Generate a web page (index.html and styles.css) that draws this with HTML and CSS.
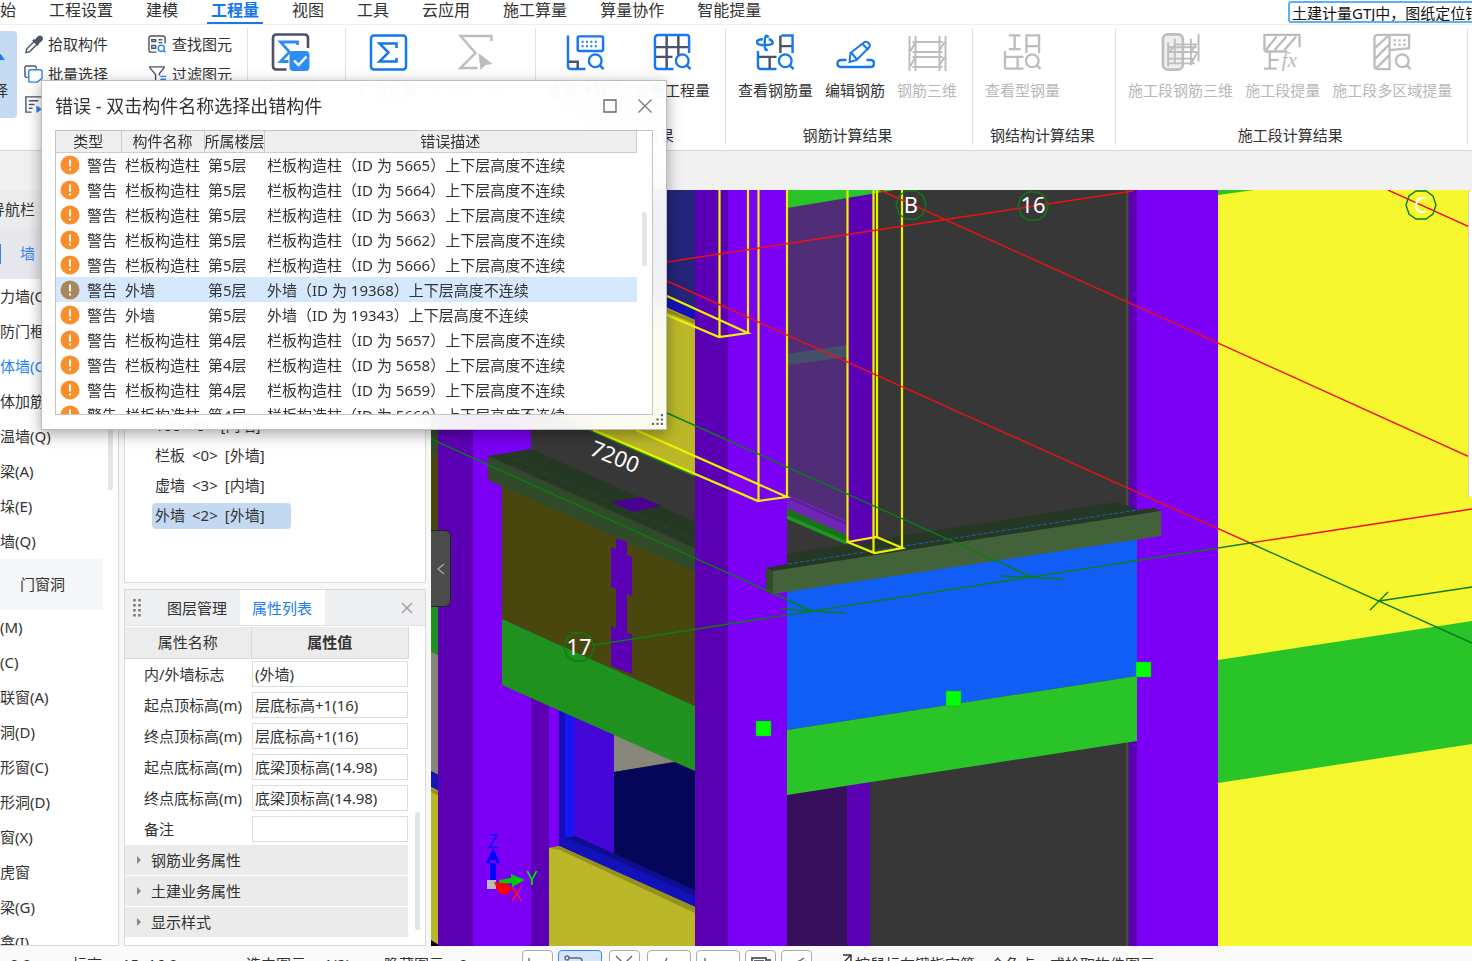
FILE: index.html
```html
<!DOCTYPE html>
<html lang="zh-CN">
<head>
<meta charset="utf-8">
<title>土建计量 GTJ</title>
<link rel="stylesheet" href="styles.css">
</head>
<body>
<svg class="defs" aria-hidden="true">
  <symbol id="warn" viewBox="0 0 20 20"><circle cx="10" cy="10" r="9.5"/><path d="M10 4.5v7M10 13.6v2" stroke="#fff" stroke-width="2"/></symbol>
  <symbol id="mag" viewBox="0 0 18 18"><circle cx="8" cy="8" r="6.5" fill="none" stroke-width="2.4"/><path d="M12.5 12.5l4 4" stroke-width="2.6"/></symbol>
</svg>

<header class="menubar">
  <nav class="menu">
    <a href="#">开始</a><a href="#">工程设置</a><a href="#">建模</a><a href="#" class="active">工程量</a><a href="#">视图</a><a href="#">工具</a><a href="#">云应用</a><a href="#">施工算量</a><a href="#">算量协作</a><a href="#">智能提量</a>
  </nav>
  <input class="search" aria-label="搜索" value="土建计量GTJ中，图纸定位错误">
</header>

<div class="ribbon">
  <div class="group tools">
    <button class="select"><svg viewBox="0 0 38 38"><path d="M24 13l6 8H18z" fill="#1f78ec"/></svg><span>选择</span></button>
    <div class="tool-col">
      <button class="tool"><svg viewBox="0 0 20 20" fill="none" stroke="#4d5468" stroke-width="1.5"><path d="M2 18.500l1-4 8-8 3 3-8 8z"/><path d="M9.500 5l5.500 5.500" stroke-width="2.600"/><path d="M11 6.500l4-4.500q2-1.500 3.500 0t0 3.500L14 9.500z" fill="#4d5468"/></svg>拾取构件</button>
      <button class="tool"><svg viewBox="0 0 20 20" fill="none" stroke="#4d5468" stroke-width="1.500"><path d="M4 13H2.500Q1 13 1 11.500V3Q1 1 3 1h8.500Q13 1 13 3v1"/><path d="M7 5h10q2 0 2 2v7l-5 4H7q-2 0-2-2V7q0-2 2-2z" stroke="#2d84ee"/></svg>批量选择</button>
      <button class="tool"><svg viewBox="0 0 20 20" fill="none" stroke="#4d5468" stroke-width="1.500"><path d="M19 6V2H2v16h6M5 6h10M5 10h6M5 14h4"/><path d="M13 11l6 4-6 4z" fill="#2d84ee" stroke="none"/></svg>属性编辑</button>
    </div>
    <div class="tool-col">
      <button class="tool"><svg viewBox="0 0 20 20" fill="none" stroke="#4d5468" stroke-width="1.500"><path d="M18 9V3q0-2-2-2H3Q1 1 1 3v13q0 2 2 2h6M4 5h4v2H4zM4 11h4v3H4zM11 5h4M11 8h4"/><circle cx="14" cy="14" r="3.300" stroke="#2d84ee"/><path d="M16.500 16.500l2 2" stroke="#2d84ee"/></svg>查找图元</button>
      <button class="tool"><svg viewBox="0 0 20 20" fill="none" stroke="#4d5468" stroke-width="1.500"><path d="M8 18V10L2 3V2h15v1l-5 6v2"/><path d="M13 12h6M13 15h6M13 18h6" stroke="#2d84ee"/></svg>过滤图元</button>
    </div>
  </div>
  <div class="group check">
    <div class="items">
      <button class="big"><svg viewBox="0 0 38 38" fill="none"><path d="M36.500 15V5Q36.500 1.500 33 1.500H5Q1.500 1.500 1.500 5v28q0 3.500 3.500 3.500h10" stroke="#4b5266" stroke-width="2.600"/><path d="M26 12V9H9l9 10-9 9.500h8" stroke="#2d8cf5" stroke-width="2.800"/><rect x="18" y="18" width="20" height="20" rx="4" fill="#2d8cf5"/><path d="M22.500 27.500l4.500 4.500 8-8.500" stroke="#fff" stroke-width="2.400"/></svg><span>合法检查</span></button>
    </div>
  </div>
  <div class="group">
    <div class="items">
      <button class="big"><svg viewBox="0 0 38 38" fill="none" stroke="#1677ee" stroke-width="2.500"><rect x="1.500" y="2.500" width="35" height="34" rx="3"/><path d="M27 15v-4.500H10l9 9-9 9h17V25"/></svg><span>汇总计算</span></button>
      <button class="big off"><svg viewBox="0 0 38 38" fill="none" stroke-width="2.400"><path d="M35 8V3H4l15 17L4 35h17"/><path d="M22 20l14 11-7 1-5 5z" class="solid"/></svg><span>汇总选中图元</span></button>
    </div>
  </div>
  <div class="group">
    <div class="items">
      <button class="big"><svg viewBox="0 0 40 38" fill="none" stroke="#1677ee" stroke-width="2.500"><path d="M2 2v31q0 3.500 3.500 3.500H20"/><rect x="12" y="3" width="26" height="15" rx="1.500"/><path d="M16 8.500h18M16 13h18" stroke-width="2" stroke-dasharray="2 2.500"/><path d="M3 29h9v7" stroke="#4b5266"/><use href="#mag" x="22" y="20" width="18" height="18"/></svg><span>查看计算式</span></button>
      <button class="big"><svg viewBox="0 0 40 38" fill="none" stroke="#1677ee" stroke-width="2.500"><path d="M14 2v34M26 2v20M2 14h36M2 24h18" stroke="#4b5266"/><path d="M37 20V4q0-2.500-2.500-2.500h-29Q2 1.500 2 5v28q0 3.500 3.500 3.500H21"/><use href="#mag" x="22" y="20" width="18" height="18"/></svg><span>查看工程量</span></button>
    </div>
    <div class="caption">土建计算结果</div>
  </div>
  <div class="group">
    <div class="items">
      <button class="big"><svg viewBox="0 0 40 38" fill="none" stroke="#1677ee" stroke-width="2.500"><path d="M13 4q-4-5-4 5v3q0 7 3 4M7 6Q1 6 1 9t8 3q9 0 8-3t-4-3M2 18v15q0 3.500 3.500 3.500H21"/><path d="M3 24h18M14 24v12M25 20V2M26 13h11" stroke="#4b5266"/><path d="M26 2h11.500v18"/><use href="#mag" x="22" y="20" width="18" height="18"/></svg><span>查看钢筋量</span></button>
      <button class="big"><svg viewBox="0 0 38 38" fill="none" stroke="#1677ee" stroke-width="2.400"><path d="M10 27H5q-4 0-4 3.500T5 34h29q3.500 0 3.500-3.500T34 27h-4"/><path d="M13 29l1-9L28 9q2-1 4 1t1 4L20 27zM26 11l6 6M15 20l5 6" stroke-width="2"/></svg><span>编辑钢筋</span></button>
      <button class="big off"><svg viewBox="0 0 38 38" fill="none" stroke-width="2"><path d="M1 3v36M7 3v36M31 3v36M37 3v36M4 9h30M4 19h30M4 24h30M4 34h30M7 9l-5 9M36 9l-6 10M7 24l-5 9M36 24l-6 10"/></svg><span>钢筋三维</span></button>
    </div>
    <div class="caption">钢筋计算结果</div>
  </div>
  <div class="group steel">
    <div class="items">
      <button class="big off"><svg viewBox="0 0 40 38" fill="none" stroke-width="2.400"><path d="M6 2h12M6 16h12M12 2v14M24 20V2h13v18M25 13h12M2 18v18M2 24h19M2 36h19M15 24v12"/><use href="#mag" x="22" y="20" width="18" height="18"/></svg><span>查看型钢量</span></button>
    </div>
    <div class="caption">钢结构计算结果</div>
  </div>
  <div class="group">
    <div class="items">
      <button class="big off"><svg viewBox="0 0 40 40" fill="none" stroke-width="2"><rect x="1.500" y="1.500" width="21" height="37" rx="5" fill="#eee" stroke-width="2.800"/><path d="M7 10v25M14 6v27M31 6v28M39 1v29M8 15h29M8 20h29M8 27h27M8 32h27M14 12h22l-5 9M15 12l-7 8M38 20l-7 12"/></svg><span>施工段钢筋三维</span></button>
      <button class="big off"><svg viewBox="0 0 40 38" fill="none" stroke-width="2.400"><path d="M1.500 18V1.500h36V14M1.500 18.500H25M3 17L14 3M12 17L24 3M22 17L34 3M7 19v17M1 36h13M7 27h9"/><text x="19" y="34" class="fx">fx</text></svg><span>施工段提量</span></button>
      <button class="big off"><svg viewBox="0 0 40 38" fill="none" stroke-width="2.400"><path d="M37 15V1.500H5Q1.500 1.500 1.500 5v28q0 3.500 3.500 3.500h12V2M17 17l21-2M2 15L15 3M2 26l15-15M3 36l14-14"/><path d="M21 7h13M21 11.500h13" stroke-dasharray="2.500 2.500"/><use href="#mag" x="22" y="20" width="18" height="18"/></svg><span>施工段多区域提量</span></button>
    </div>
    <div class="caption">施工段计算结果</div>
  </div>
</div>

<div class="strip"></div>

<main class="workspace">
  <aside class="nav">
    <div class="nav-title">导航栏</div>
    <div class="nav-group current">墙</div>
    <ul class="nav-list">
      <li>剪力墙(Q)</li><li>人防门框墙(RF)</li><li class="on">砌体墙(Q)</li><li>砌体加筋(Y)</li><li>保温墙(Q)</li><li>暗梁(A)</li><li>墙垛(E)</li><li>幕墙(Q)</li>
    </ul>
    <div class="nav-group">门窗洞</div>
    <ul class="nav-list">
      <li>门(M)</li><li>窗(C)</li><li>门联窗(A)</li><li>墙洞(D)</li><li>带形窗(C)</li><li>带形洞(D)</li><li>飘窗(X)</li><li>老虎窗</li><li>过梁(G)</li><li>壁龛(I)</li>
    </ul>
    <i class="thumb nav-thumb"></i>
  </aside>

  <div class="side">
    <section class="panel components">
      <ul>
        <li><span>100</span><span>&lt;0&gt;</span><span>[内墙]</span></li>
        <li><span>栏板</span><span>&lt;0&gt;</span><span>[外墙]</span></li>
        <li><span>虚墙</span><span>&lt;3&gt;</span><span>[内墙]</span></li>
        <li class="on"><span>外墙</span><span>&lt;2&gt;</span><span>[外墙]</span></li>
      </ul>
    </section>
    <section class="panel props">
      <div class="tabs">
        <svg class="grip" viewBox="0 0 8 18"><path d="M1.500 0v18M6.500 0v18" stroke="#777" stroke-width="2.500" stroke-dasharray="2.500 2.500"/></svg>
        <button class="tab">图层管理</button><button class="tab on">属性列表</button>
        <button class="close" aria-label="关闭"><svg viewBox="0 0 12 12"><path d="M1 1l10 10M11 1L1 11" stroke="#999" stroke-width="1.300"/></svg></button>
      </div>
      <table class="prop-table">
        <thead><tr><th>属性名称</th><th class="strong">属性值</th></tr></thead>
        <tbody>
          <tr><td><label for="p1">内/外墙标志</label></td><td><input id="p1" value="(外墙)"></td></tr>
          <tr><td><label for="p2">起点顶标高(m)</label></td><td><input id="p2" value="层底标高+1(16)"></td></tr>
          <tr><td><label for="p3">终点顶标高(m)</label></td><td><input id="p3" value="层底标高+1(16)"></td></tr>
          <tr><td><label for="p4">起点底标高(m)</label></td><td><input id="p4" value="底梁顶标高(14.98)"></td></tr>
          <tr><td><label for="p5">终点底标高(m)</label></td><td><input id="p5" value="底梁顶标高(14.98)"></td></tr>
          <tr><td><label for="p6">备注</label></td><td><input id="p6" value=""></td></tr>
        </tbody>
      </table>
      <div class="folds">
        <button>钢筋业务属性</button><button>土建业务属性</button><button>显示样式</button>
      </div>
      <i class="thumb prop-thumb"></i>
    </section>
  </div>

  <section class="view">
    <svg class="scene" viewBox="431 190 1041 756" preserveAspectRatio="xMinYMin slice">
      <rect x="431" y="190" width="1041" height="756" fill="#373737"/>
      <!-- far left bay -->
      <path d="M431 190h264v120L431 190z" fill="#24247a"/>
      <path d="M431 192l264 118v10L431 203z" fill="#1212b8"/>
      <path d="M431 203l264 117v155L431 359z" fill="#bab828"/>
      <path d="M667 309l28 11v4l-28-12z" fill="#96901f"/>
      <path d="M560 415l135 59v3L560 418z" fill="#1b8a1b"/>
      <path d="M431 430h8v26h-8z" fill="#304a2a"/>
      <path d="M431 452l8 4v150h-8z" fill="#4a470e"/>
      <path d="M431 600h8v55l-8-3z" fill="#1e911e"/>
      <path d="M431 652l8 3v121h-8z" fill="#86867a"/>
      <path d="M431 771l8 4v16l-8-4z" fill="#1515b5"/>
      <path d="M431 787l8 4v155h-8z" fill="#bab828"/>
      <path d="M431 788l8 4v4l-8-4z" fill="#96901f"/>
      <path d="M431 940l8 5v1h-8z" fill="#000"/>
      <!-- left column -->
      <path d="M438 190h35v756h-35z" fill="#5c00b5"/>
      <path d="M473 190h58v756h-58z" fill="#7b00f5"/>
      <path d="M531 690h18v256h-18z" fill="#5c00b5"/>
      <path d="M549 690h10v160h-10z" fill="#7b00f5"/>
      <!-- window bay -->
      <path d="M559 700h15v146h-15z" fill="#1010b5"/>
      <path d="M565 703h9v134h-9z" fill="#1515f5"/>
      <path d="M574 710h40v150l-40-23z" fill="#4507d8"/>
      <path d="M614 730l70 30-70 12z" fill="#86867a"/>
      <path d="M614 772l62-10 19 9v120l-81-37z" fill="#060658"/>
      <path d="M559 846l14-10 122 55v16z" fill="#1212b8"/>
      <path d="M567 838l8-2 120 54v6z" fill="#0e0e90"/>
      <path d="M549 848l10-2 136 61v39H549z" fill="#bab828"/>
      <path d="M549 848l10-2 136 61v6L560 850z" fill="#96901f"/>
      <!-- left wall and ledge -->
      <path d="M502 480l193 92v134l-193-87z" fill="#4a470e"/>
      <path d="M502 619l193 87v65l-193-86z" fill="#1e911e"/>
      <path d="M488 456l43-7 164 73v26z" fill="#243823"/>
      <path d="M488 456l207 92v24L488 480z" fill="#304a2a"/>
      <path d="M512 458l183 82" stroke="#33451f" stroke-dasharray="6 5"/>
      <path d="M611 502l30-5 20 9-28 6z" fill="#4a0090"/>
      <path d="M616 538l11 4v13l5 2v39l-5-2v39l5 1v40l-21-8v-40l5 2v-39l-5-2v-40l5 2z" fill="#5c00b5"/>
      <!-- middle column -->
      <path d="M695 190h33v756h-33z" fill="#5c00b5"/>
      <path d="M728 190h59v756h-59z" fill="#7b00f5"/>
      <!-- opening -->
      <path d="M787 190h60v332l-60-28z" fill="#522d77"/>
      <path d="M787 354l60-9v12l-60 8z" fill="#44506a"/>
      <path d="M787 494l60 27v16l-60-27z" fill="#6f25b8"/>
      <path d="M787 497l60 27" stroke="#5a1f96" stroke-width="2"/>
      <path d="M787 508l60 27v7l-60-27z" fill="#1b701b"/>
      <path d="M787 515l60 26v4l-60-26z" fill="#1f961f"/>
      <path d="M847 190h25v355h-25z" fill="#5c00b5"/>
      <path d="M787 190h108l-108 18z" fill="#28c428"/>
      <path d="M1127 190v315M1127 742v204" stroke="#4a4a45" stroke-width="2"/>
      <path d="M1129 190h8v756h-8z" fill="#5c00b5"/>
      <path d="M787 780h60v166h-60z" fill="#37105c"/>
      <path d="M847 780h23v166h-23z" fill="#5c00b5"/>
      <!-- right column and wall -->
      <path d="M1137 190h81v756h-81z" fill="#7b00f5"/>
      <path d="M1218 190h254v756h-254z" fill="#f7f72f"/>
      <path d="M1218 190h36l-36 5zM1218 660l254-39v123l-254 39z" fill="#28c428"/>
      <!-- selected wall -->
      <path d="M787 585l350-50v141l-350 54z" fill="#105ef5"/>
      <path d="M787 730l350-54v65l-350 54z" fill="#28c428"/>
      <path d="M766 568l21-4v-10l330-52 19 8 18-2 7 3-388 60z" fill="#243823"/>
      <path d="M773 571l388-60v25l-388 58z" fill="#42623a"/>
      <path d="M766 568l7 3v23l-7-2z" fill="#304a2a"/>
      <path d="M788 564l349-54" stroke="#1f5fb0" stroke-dasharray="4 2"/>
      <!-- yellow wireframes -->
      <g fill="none" stroke="#f0f000" stroke-width="2.200">
        <path d="M719.500 190v146M748 190v143M667 315l52 22 29-4-81-37"/>
        <path d="M758.500 190v310M787 190v307M593 430l165 71 29-4-151-67"/>
        <path d="M847.500 190v352l27 11 28-5-26-11-29 5M873.500 190v362M877 190v347M902 190v358"/>
      </g>
      <!-- axes -->
      <g fill="none" stroke="#f01010" stroke-width="1.400">
        <path d="M667 262l466-71M667 281l583 262 222-34M880 190l592 268M1388 190l84 38"/>
      </g>
      <g fill="none" stroke="#0a7d14" stroke-width="1.400">
        <path d="M431 439l381 172M667 413l365 164M594 645l656-102 222 100M781 609l64 4M1000 576l64 3M1370 610l18-18M1379 601l93-14"/>
        <path id="tag" d="M594 647l-3 9-7 5-10 0-7-5-3-9 3-9 7-5 10 0 7 5z"/>
        <use href="#tag" x="332" y="-442"/><use href="#tag" x="454" y="-441"/><use href="#tag" x="842" y="-442"/>
      </g>
      <g class="mark" fill="#fff" text-anchor="middle">
        <text x="579" y="655">17</text><text x="911" y="213">B</text><text x="1033" y="213">16</text><text x="1421" y="213">C</text>
        <text x="612" y="464" transform="rotate(22 612 464)">7200</text>
      </g>
      <g fill="#0f0" stroke="#1c9c30" stroke-width=".5"><path d="M756 721h15v15h-15zM946 691h15v15h-15zM1136 662h15v15h-15z"/></g>
      <!-- axis gizmo -->
      <path d="M490 860h6v20h-6zM493 848l-7 15 14 0z" fill="#0000f5"/>
      <path d="M487 880h9v9h-9z" fill="#bbb"/>
      <path d="M499 880l12-2v-4l14 6-13 7v-4l-12 1z" fill="#0c0"/>
      <path d="M494 882l5 1 6 0 7 6-6 6-6-1-3-5z" fill="#f00"/>
      <g class="axis" text-anchor="middle"><text x="493" y="848" fill="#1010ff">Z</text><text x="532" y="885" fill="#0d0">Y</text><text x="516" y="901" fill="#f01030">X</text></g>
    </svg>
    <button class="collapse" aria-label="收起"><svg viewBox="0 0 8 12"><path d="M7 1L1 6l6 5" fill="none" stroke="#aaa" stroke-width="1.200"/></svg></button>
    <div class="edge"></div>
  </section>
</main>

<footer class="status">
  <div class="readout"><span class="s1">0.0</span><span class="s2">标高:</span><span class="s3">15~16.9</span><span class="s4">选中图元:</span><span class="s5">1(2)</span><span class="s6">隐藏图元:</span><span>0</span></div>
  <div class="modes">
    <button aria-label="正交"><svg viewBox="0 0 20 20"><path d="M1 3v14h14"/></svg></button>
    <button class="wide on" aria-label="捕捉"><svg viewBox="0 0 20 20"><circle cx="3" cy="3" r="2"/><path d="M5 3h10q3 0 3 3v10"/></svg></button>
    <button class="apart" aria-label="交点"><svg viewBox="0 0 20 20"><path d="M1 1l8 8 8-8"/></svg></button>
    <button class="wide" aria-label="垂点"><svg viewBox="0 0 20 20"><path d="M14 3L8 16"/></svg></button>
    <button class="wide" aria-label="坐标"><svg viewBox="0 0 20 20"><path d="M3 3v14h14"/></svg></button>
    <button aria-label="图层"><svg viewBox="0 0 20 20"><path d="M1 3h14v15H1zM4 6h8v9H4zM15 5h4v10" stroke-width="2"/></svg></button>
    <button aria-label="测量"><svg viewBox="0 0 20 20"><path d="M1 8q10 0 16-5M3 11q10 0 16-5"/></svg></button>
  </div>
  <div class="hint"><svg viewBox="0 0 12 12"><path d="M3 1h8v8M11 1L2 10" fill="none" stroke="#333" stroke-width="1.400"/></svg>按鼠标左键指定第一个角点，或拾取构件图元</div>
</footer>

<section class="dialog" role="dialog" aria-labelledby="dlg-title">
  <header class="dlg-head">
    <h1 id="dlg-title">错误 - 双击构件名称选择出错构件</h1>
    <button aria-label="最大化"><svg viewBox="0 0 14 14"><path d="M1 1h12v12H1z" fill="none" stroke="#666" stroke-width="1.300"/></svg></button>
    <button aria-label="关闭"><svg viewBox="0 0 14 14"><path d="M.5.5l13 13M13.500.5l-13 13" stroke="#777" stroke-width="1.300"/></svg></button>
  </header>
  <div class="dlg-body">
    <table class="errors">
      <thead><tr><th class="c1">类型</th><th class="c2">构件名称</th><th class="c3">所属楼层</th><th>错误描述</th></tr></thead>
      <tbody>
        <tr><td><svg><use href="#warn"/></svg>警告</td><td>栏板构造柱</td><td>第5层</td><td>栏板构造柱（ID 为 5665）上下层高度不连续</td></tr>
        <tr><td><svg><use href="#warn"/></svg>警告</td><td>栏板构造柱</td><td>第5层</td><td>栏板构造柱（ID 为 5664）上下层高度不连续</td></tr>
        <tr><td><svg><use href="#warn"/></svg>警告</td><td>栏板构造柱</td><td>第5层</td><td>栏板构造柱（ID 为 5663）上下层高度不连续</td></tr>
        <tr><td><svg><use href="#warn"/></svg>警告</td><td>栏板构造柱</td><td>第5层</td><td>栏板构造柱（ID 为 5662）上下层高度不连续</td></tr>
        <tr><td><svg><use href="#warn"/></svg>警告</td><td>栏板构造柱</td><td>第5层</td><td>栏板构造柱（ID 为 5666）上下层高度不连续</td></tr>
        <tr class="on"><td><svg><use href="#warn"/></svg>警告</td><td>外墙</td><td>第5层</td><td>外墙（ID 为 19368）上下层高度不连续</td></tr>
        <tr><td><svg><use href="#warn"/></svg>警告</td><td>外墙</td><td>第5层</td><td>外墙（ID 为 19343）上下层高度不连续</td></tr>
        <tr><td><svg><use href="#warn"/></svg>警告</td><td>栏板构造柱</td><td>第4层</td><td>栏板构造柱（ID 为 5657）上下层高度不连续</td></tr>
        <tr><td><svg><use href="#warn"/></svg>警告</td><td>栏板构造柱</td><td>第4层</td><td>栏板构造柱（ID 为 5658）上下层高度不连续</td></tr>
        <tr><td><svg><use href="#warn"/></svg>警告</td><td>栏板构造柱</td><td>第4层</td><td>栏板构造柱（ID 为 5659）上下层高度不连续</td></tr>
        <tr><td><svg><use href="#warn"/></svg>警告</td><td>栏板构造柱</td><td>第4层</td><td>栏板构造柱（ID 为 5660）上下层高度不连续</td></tr>
      </tbody>
    </table>
    <i class="thumb dlg-thumb"></i>
  </div>
  <svg class="resize" viewBox="0 0 10 10"><path d="M0 8h2v2H0zM4 8h2v2H4zM8 8h2v2H8zM4 4h2v2H4zM8 4h2v2H8zM8 0h2v2H8z" fill="#667"/></svg>
</section>
</body>
</html>
```

FILE: styles.css
```css
* { box-sizing: border-box; }
body {
  margin: 0;
  height: 100vh;
  overflow: hidden;
  display: flex;
  flex-direction: column;
  position: relative;
  background: #f1f1f1;
  color: #333;
  font: 15px/20px "Noto Sans", "Noto Sans CJK SC", sans-serif;
}
button, input { font: inherit; color: inherit; }
button { border: 0; background: none; padding: 0; white-space: nowrap; }
ul { list-style: none; margin: 0; padding: 0; }
.defs { position: absolute; width: 0; height: 0; }
.thumb { position: absolute; border-radius: 3px; background: #e4e4e4; }

/* menu bar */
.menubar {
  flex: 0 0 25px;
  display: flex;
  justify-content: space-between;
  background: #fff;
  border-bottom: 1px solid #eee;
  overflow: hidden;
}
.menu { display: flex; gap: 33px; margin-left: -16px; font-size: 16px; line-height: 21px; }
.menu a { color: #333; text-decoration: none; white-space: nowrap; height: 24px; }
.menu .active {
  color: #1677ee;
  font-weight: 700;
  margin: 0 -4px;
  padding: 0 4px;
  border-bottom: 2px solid #1677ee;
}
.search {
  flex: 0 0 200px;
  width: 200px;
  min-width: 0;
  height: 22px;
  margin: 1px -16px 0 0;
  padding: 1px 2px 0;
  border: 2px solid #5cb1f2;
  border-radius: 3px;
  background: #fff;
  color: #111;
}

/* ribbon */
.ribbon { flex: 0 0 126px; display: flex; background: #fff; border-bottom: 1px solid #d6d6d6; padding: 3px 0 5px; overflow: hidden; }
.group { display: flex; flex-direction: column; justify-content: space-between; padding: 0 15px 0 12px; border-right: 1px solid #e0e0e0; }
.check { min-width: 98px; }
.steel { min-width: 143px; }
.items { display: flex; gap: 12px; padding-top: 5px; }
.big { display: flex; flex-direction: column; align-items: center; gap: 9px; }
.big svg { width: 39px; height: 38px; }
.off { color: #b8b8b8; stroke: #bdbdbd; }
.off span { stroke: none; }
.off .solid, .fx { fill: #bdbdbd; stroke: none; }
.fx { font: italic 22px "Liberation Serif", serif; }
.caption { text-align: center; line-height: 20px; white-space: nowrap; }
.tools { flex-direction: row; justify-content: flex-start; flex: 0 0 248px; min-width: 0; padding: 0; }
.select {
  flex: 0 0 17px;
  height: 87px;
  margin-top: 3px;
  background: #c4dbf3;
  border-radius: 0 4px 4px 0;
  display: flex;
  flex-direction: column;
  align-items: flex-end;
  justify-content: space-between;
  padding: 8px 9px 18px 0;
  overflow: hidden;
}
.select svg { width: 38px; height: 38px; flex: none; margin-right: -5px; }
.tool-col { display: flex; flex-direction: column; padding: 1px 0 0 7px; width: 124px; }
.tool-col:last-child { width: 106px; }
.tool { display: flex; align-items: center; gap: 5px; height: 30px; }
.tool svg { width: 19px; height: 19px; flex: none; }
.strip { flex: 0 0 39px; background: #f1f1f1; }

/* workspace */
.workspace { flex: 1; min-height: 0; display: flex; background: #f7f7f7; }
.nav { flex: 0 0 119px; position: relative; overflow: hidden; background: #fff; border: solid #d9d9d9; border-width: 0 1px 1px 0; }
.nav-title { height: 38px; line-height: 38px; text-indent: -10px; background: #ececee; }
.nav-group { height: 51px; line-height: 51px; padding-left: 20px; background: #f5f6f8; width: 103px; }
.current { width: auto; background: #e6e8ee; color: #3c82f0; position: relative; }
.current::before { content: ""; position: absolute; left: 0; top: 16px; width: 1px; height: 20px; background: #3c82f0; }
.nav-list { margin-left: -15px; }
.nav-list li { height: 35px; line-height: 35px; white-space: nowrap; }
.nav-list .on { color: #1f86f5; }
.nav-thumb { right: 5px; top: 40px; width: 5px; height: 260px; }

.side { flex: 0 0 302px; margin: 0 5px; display: flex; flex-direction: column; gap: 6px; }
.panel { background: #fff; border: 1px solid #d9d9d9; position: relative; }
.components { flex: 1; display: flex; flex-direction: column; justify-content: flex-end; padding: 0 0 53px 27px; }
.components li { display: flex; gap: 7px; width: 139px; height: 26px; line-height: 24px; margin-top: 4px; padding-left: 3px; border-radius: 4px; }
.components .on { background: #c2d9f1; }
.props { flex: 0 0 357px; }
.tabs { display: flex; align-items: center; height: 36px; background: #eeeff1; border-bottom: 1px solid #e2e2e2; padding-left: 8px; }
.grip { width: 8px; height: 18px; margin-right: 14px; }
.tab { padding: 0 13px 0 12px; height: 35px; }
.tab.on { background: #fff; color: #1f7cf0; }
.close { margin: 0 12px 0 auto; }
.close svg { width: 12px; height: 12px; display: block; }
.prop-table { width: 284px; border-collapse: collapse; table-layout: fixed; margin-top: 1px; }
.prop-table th { height: 31px; padding: 0; background: #ececec; border: solid #d8d8d8; border-width: 0 1px 1px 0; font-weight: 400; }
.prop-table th:first-child { width: 126px; }
.prop-table .strong { font-weight: 700; }
.prop-table td { height: 31px; padding: 0 1px; white-space: nowrap; }
.prop-table td:first-child { padding-left: 19px; }
.prop-table input { display: block; width: 100%; height: 26px; padding: 0 2px; border: 1px solid #dedede; background: #fff; }
.folds { width: 283px; display: flex; flex-direction: column; gap: 1px; padding-top: 1px; }
.folds button { height: 30px; text-align: left; padding-left: 12px; background: #ebebeb; display: flex; align-items: center; gap: 10px; }
.folds button::before { content: ""; border: 4px solid transparent; border-left-color: #888; border-right: 0; }
.prop-thumb { right: 5px; bottom: 15px; width: 5px; height: 118px; }

/* model view */
.view { flex: 1; position: relative; overflow: hidden; }
.scene { display: block; width: 100%; height: 100%; }
.mark { font: 22px "Noto Sans", sans-serif; }
.axis { font: 20px "Noto Sans", sans-serif; }
.collapse { position: absolute; left: 0; top: 340px; width: 20px; height: 77px; background: #4b4b4b; border-radius: 0 6px 6px 0; border: solid #222; border-width: 1px 1px 1px 0; }
.collapse svg { width: 8px; height: 12px; }
.edge { position: absolute; right: 0; top: 0; width: 4px; height: 307px; background: #fff; border-left: 1px solid #ccc; border-radius: 4px 0 0 4px; }

/* status bar */
.status { flex: 0 0 15px; display: flex; align-items: flex-start; overflow: hidden; background: #fafafa; white-space: nowrap; }
.readout { display: flex; flex: 0 0 522px; padding: 8px 0 0 10px; }
.s1 { width: 62px; }
.s2 { width: 50px; }
.s3 { width: 124px; }
.s4 { width: 78px; }
.s5 { width: 60px; }
.s6 { width: 75px; }
.modes { display: flex; gap: 5px; padding-top: 4px; }
.modes button { width: 31px; height: 28px; border: 1px solid #aaa; border-radius: 4px; background: #fff; display: flex; justify-content: flex-start; padding: 4px 5px; }
.modes .wide { width: 44px; }
.modes .apart { margin: 0 2px; }
.modes .on { background: #d5e5fa; border-color: #3c8cf0; }
.modes svg { width: 20px; height: 20px; flex: none; fill: none; stroke: #667; stroke-width: 1.4; }
.hint { display: flex; gap: 3px; padding: 8px 0 0 28px; }
.hint svg { width: 12px; height: 12px; }

/* error dialog */
.dialog {
  position: absolute;
  left: 41px;
  top: 80px;
  width: 626px;
  padding: 0 13px 14px;
  background: rgba(255, 255, 255, .93);
  backdrop-filter: blur(20px);
  border: 1px solid #bcbcbc;
  box-shadow: 0 4px 14px rgba(0, 0, 0, .35);
}
.dlg-head { display: flex; align-items: center; gap: 21px; height: 49px; padding-right: 1px; }
.dlg-head h1 { flex: 1; margin: 0; font-size: 18px; font-weight: 400; line-height: 24px; }
.dlg-head svg { display: block; width: 14px; height: 14px; }
.dlg-body { height: 285px; overflow: hidden; position: relative; background: #fff; border: 1px solid #c4c4c4; }
.errors { width: 581px; border-collapse: collapse; table-layout: fixed; }
.errors th { height: 21px; line-height: 18px; padding: 0; font-weight: 400; background: #efefef; border: solid #ccc; border-width: 0 1px 1px 0; white-space: nowrap; }
.errors .c1 { width: 65px; }
.errors .c2 { width: 83px; }
.errors .c3 { width: 60px; }
.errors td { height: 25px; padding: 0 0 0 4px; white-space: nowrap; }
.errors td:last-child { padding-left: 3px; }
.errors svg { width: 20px; height: 20px; margin-right: 7px; vertical-align: top; fill: #f98e2b; }
.errors .on { background: #d5e8fd; }
.errors .on svg { fill: #ab865c; }
.dlg-thumb { right: 5px; top: 81px; width: 5px; height: 54px; }
.resize { position: absolute; right: 3px; bottom: 4px; width: 11px; height: 11px; }
```
